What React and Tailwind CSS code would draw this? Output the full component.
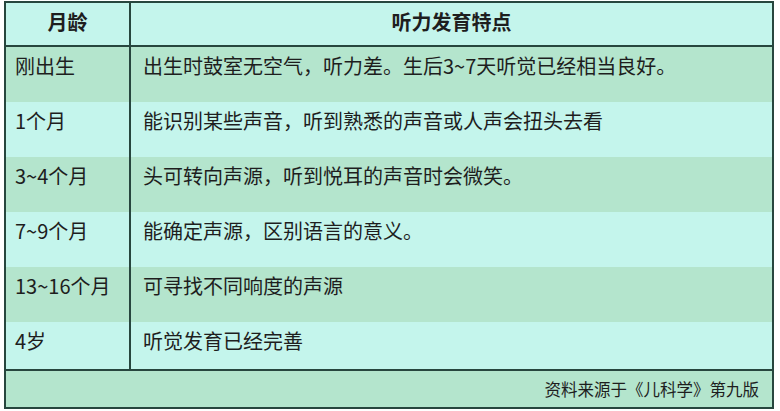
import React from 'react';

const rows = [
  { age: '刚出生', text: '出生时鼓室无空气，听力差。生后3~7天听觉已经相当良好。', green: true, h: 'h-[55px]' },
  { age: '1个月', text: '能识别某些声音，听到熟悉的声音或人声会扭头去看', green: false, h: 'h-[55px]' },
  { age: '3~4个月', text: '头可转向声源，听到悦耳的声音时会微笑。', green: true, h: 'h-[55px]' },
  { age: '7~9个月', text: '能确定声源，区别语言的意义。', green: false, h: 'h-[55px]' },
  { age: '13~16个月', text: '可寻找不同响度的声源', green: true, h: 'h-[55px]' },
  { age: '4岁', text: '听觉发育已经完善', green: false, h: 'h-[47px]' },
];

const App = () => {
  return (
    <div className="w-[780px] h-[411px] bg-white pt-[1px] pl-[4px] font-['Noto_Sans_CJK_SC',sans-serif] text-[#1e1e1e]">
      <div className="w-[770px] border-2 border-[#27463e] flex flex-col">
        {/* 表头 */}
        <div className="grid grid-cols-[125px_1fr] h-[44px] bg-[#c4f5ec] border-b-2 border-[#27463e] font-bold text-[20px] leading-[20px]">
          <div className="border-r-2 border-[#27463e] flex justify-center pt-[9px]">月龄</div>
          <div className="flex justify-center pt-[9px]">听力发育特点</div>
        </div>

        {rows.map((r) => (
          <div key={r.age} className={`grid grid-cols-[125px_1fr] ${r.h} ${r.green ? 'bg-[#b4e5cd]' : 'bg-[#c4f5ec]'} text-[20px] leading-[20px]`}>
            <div className="border-r-2 border-[#27463e] pl-[9px] pt-[9px]">{r.age}</div>
            <div className="pl-[12px] pt-[9px] whitespace-nowrap">{r.text}</div>
          </div>
        ))}

        {/* 来源 */}
        <div className="h-[38px] bg-[#b4e5cd] border-t-2 border-[#27463e] flex justify-end items-center pr-[13px] text-[16.5px] leading-[17px]">
          资料来源于《儿科学》第九版
        </div>
      </div>
    </div>
  );
};

export default App;
